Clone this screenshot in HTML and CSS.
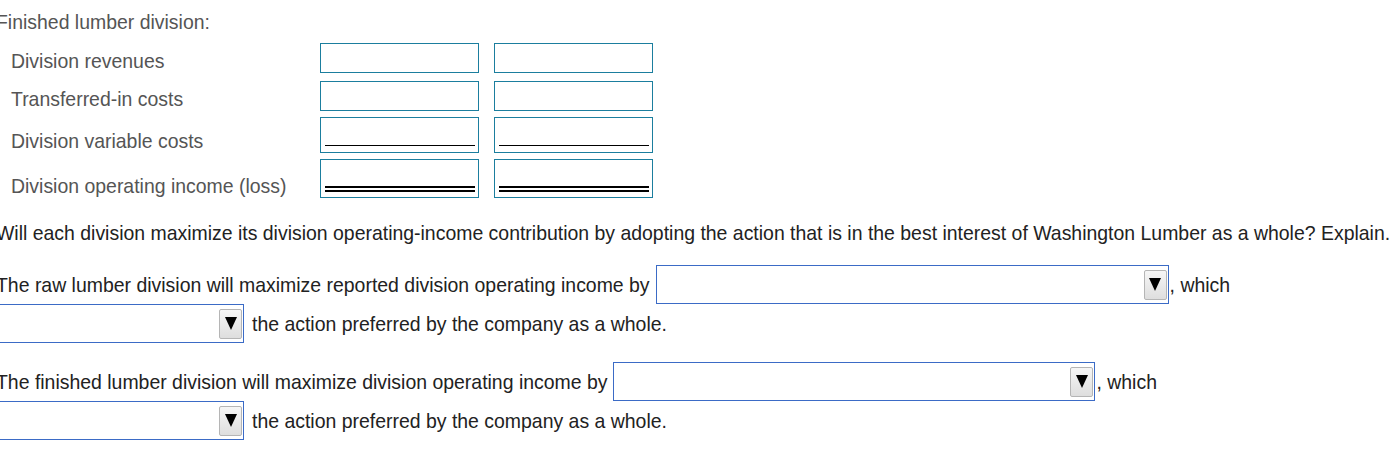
FILE: index.html
```html
<!DOCTYPE html>
<html>
<head>
<meta charset="utf-8">
<link rel="stylesheet" href="styles.css">
</head>
<body>
<div class="page">
  <div class="heading">Finished lumber division:</div>
  <div class="row r1">
    <div class="label">Division revenues</div>
    <div class="box"></div>
    <div class="box"></div>
  </div>
  <div class="row r2">
    <div class="label">Transferred-in costs</div>
    <div class="box"></div>
    <div class="box"></div>
  </div>
  <div class="row r3">
    <div class="label">Division variable costs</div>
    <div class="box single"><div class="uline"></div></div>
    <div class="box single"><div class="uline"></div></div>
  </div>
  <div class="row r4">
    <div class="label">Division operating income (loss)</div>
    <div class="box double"><div class="dline"></div></div>
    <div class="box double"><div class="dline"></div></div>
  </div>
  <div class="question">Will each division maximize its division operating-income contribution by adopting the action that is in the best interest of Washington Lumber as a whole? Explain.</div>

  <div class="para p1">
    <div class="line">
      <span class="txt">The raw lumber division will maximize reported division operating income by</span>
      <div class="select s1"><span class="btn"><span class="tri"></span></span></div>
      <span class="txt after">, which</span>
    </div>
    <div class="line">
      <div class="select s2"><span class="btn"><span class="tri"></span></span></div>
      <span class="txt tail">the action preferred by the company as a whole.</span>
    </div>
  </div>

  <div class="para p2">
    <div class="line">
      <span class="txt">The finished lumber division will maximize division operating income by</span>
      <div class="select s3"><span class="btn"><span class="tri"></span></span></div>
      <span class="txt after">, which</span>
    </div>
    <div class="line">
      <div class="select s2"><span class="btn"><span class="tri"></span></span></div>
      <span class="txt tail">the action preferred by the company as a whole.</span>
    </div>
  </div>
</div>
</body>
</html>
```

FILE: styles.css
```css
html, body {
  margin: 0;
  padding: 0;
  background: #fff;
}
body {
  font-family: "Liberation Sans", Arial, sans-serif;
  font-size: 19.45px;
  line-height: 22px;
  color: #222;
  overflow: hidden;
}
.page {
  margin-left: -4px;
  padding-top: 11px;
}
.heading {
  color: #555;
  height: 22px;
}
.row {
  display: flex;
  align-items: flex-end;
  margin-left: 15px;
}
.r1 { margin-top: 10px; }
.r2 { margin-top: 8px; }
.r3 { margin-top: 6px; }
.r4 { margin-top: 6px; }
.label {
  color: #555;
  width: 309px;
  flex: none;
  padding-bottom: 1px;
}
.box {
  box-sizing: border-box;
  width: 159px;
  height: 30px;
  border: 1px solid #1b7e9e;
  margin-right: 15px;
  flex: none;
  display: flex;
  flex-direction: column;
  justify-content: flex-end;
}
.box.single {
  height: 36px;
  padding: 0 3px 6px 4px;
}
.box.double {
  height: 39px;
  padding: 0 3px 5px 4px;
}
.uline {
  height: 1px;
  background: #000;
}
.dline {
  box-sizing: border-box;
  height: 6px;
  border-top: 2px solid #000;
  border-bottom: 2px solid #000;
}
.question {
  margin-top: 24px;
  white-space: nowrap;
}
.para.p1 { margin-top: 21px; }
.para.p2 { margin-top: 19px; }
.line {
  display: flex;
  align-items: center;
  height: 39px;
  white-space: nowrap;
}
.select {
  box-sizing: border-box;
  height: 39px;
  border: 1px solid #3b6bc6;
  background: #fff;
  display: flex;
  align-items: center;
  justify-content: flex-end;
  padding-right: 1px;
  flex: none;
}
.s1 { width: 513px; margin-left: 6px; }
.s3 { width: 482px; margin-left: 6px; }
.s2 { width: 248px; }
.btn {
  box-sizing: border-box;
  width: 23px;
  height: 30px;
  border: 1px solid #b5b5b5;
  border-radius: 2px;
  background: linear-gradient(#f6f6f6, #dedede);
  display: flex;
  align-items: center;
  justify-content: center;
}
.tri {
  width: 0;
  height: 0;
  border-left: 6px solid transparent;
  border-right: 6px solid transparent;
  border-top: 13px solid #000;
}
.after { margin-left: 1px; }
.tail { margin-left: 8px; }
```
